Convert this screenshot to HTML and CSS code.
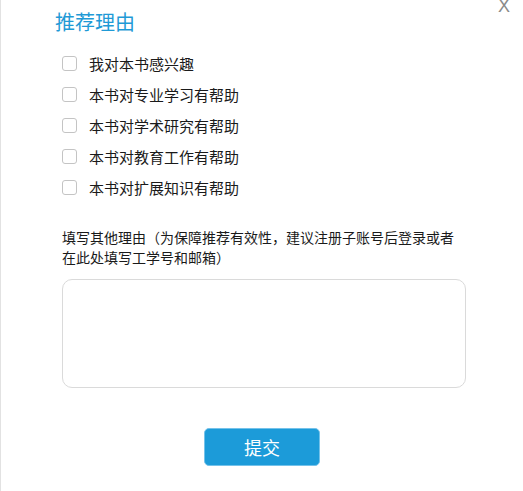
FILE: index.html
```html
<!DOCTYPE html>
<html lang="zh-CN">
<head>
<meta charset="utf-8">
<title>推荐理由</title>
<link rel="stylesheet" href="styles.css">
</head>
<body>
<div class="dialog">
  <span class="close">X</span>
  <div class="body">
    <h2 class="title">推荐理由</h2>
    <ul class="options">
      <li class="option"><span class="box"></span><span>我对本书感兴趣</span></li>
      <li class="option"><span class="box"></span><span>本书对专业学习有帮助</span></li>
      <li class="option"><span class="box"></span><span>本书对学术研究有帮助</span></li>
      <li class="option"><span class="box"></span><span>本书对教育工作有帮助</span></li>
      <li class="option"><span class="box"></span><span>本书对扩展知识有帮助</span></li>
    </ul>
    <p class="label">填写其他理由（为保障推荐有效性，建议注册子账号后登录或者在此处填写工学号和邮箱）</p>
    <div class="textarea"></div>
  </div>
  <div class="footer">
    <button class="submit">提交</button>
  </div>
</div>
</body>
</html>
```
FILE: styles.css
```css
html, body {
  margin: 0;
  padding: 0;
  background: #fff;
}
body {
  font-family: "Noto Sans CJK SC", "Noto Sans", sans-serif;
  color: #222;
}
.dialog {
  position: relative;
  width: 523px;
  height: 491px;
  box-sizing: border-box;
  border-left: 1px solid #e2e2e2;
  overflow: hidden;
}
.close {
  position: absolute;
  top: -3px;
  right: 13px;
  font-family: "Liberation Sans", Arial, sans-serif;
  font-size: 18px;
  line-height: 18px;
  color: #8a8a8a;
}
.body {
  width: 404px;
  padding: 8px 0 0 61px;
}
.title {
  margin: 0 0 0 -7px;
  font-size: 20px;
  line-height: 28px;
  font-weight: normal;
  color: #1f9ad6;
}
.options {
  list-style: none;
  margin: 12px 0 0;
  padding: 0;
}
.option {
  display: flex;
  align-items: center;
  height: 31px;
  font-size: 15px;
  color: #1a1a1a;
}
.box {
  width: 13px;
  height: 13px;
  border: 1px solid #c4c4c4;
  border-radius: 3px;
  margin-right: 12px;
  flex: none;
}
.label {
  margin: 24px 0 0;
  font-size: 14px;
  line-height: 20px;
  color: #1a1a1a;
}
.textarea {
  margin-top: 12px;
  height: 107px;
  border: 1px solid #dadada;
  border-radius: 10px;
}
.footer {
  display: flex;
  justify-content: center;
  margin-top: 40px;
}
.submit {
  width: 116px;
  height: 38px;
  background: #1c9bd9;
  border: 1px solid #74c2ea;
  border-radius: 5px;
  color: #fff;
  font-family: "Noto Sans CJK SC", sans-serif;
  font-size: 18px;
  padding: 0;
}
```
